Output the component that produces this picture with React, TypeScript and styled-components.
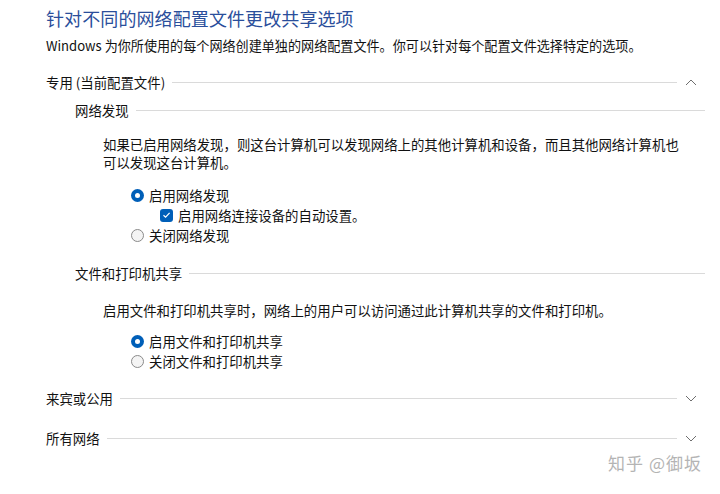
import styled, { createGlobalStyle } from "styled-components";

const GlobalStyle = createGlobalStyle`
  html, body {
    margin: 0;
    padding: 0;
    background: #ffffff;
  }
  body {
    font-family: "Noto Sans CJK SC", "Noto Sans", sans-serif;
    color: #111111;
  }
`;

const Page = styled.div`
  position: relative;
  width: 720px;
  height: 494px;
  box-sizing: border-box;
  padding: 7px 15px 0 46px;
  overflow: hidden;
`;

const Title = styled.h1`
  margin: 0;
  font-size: 18px;
  font-weight: 400;
  line-height: 22px;
  color: #2a4e9b;
  letter-spacing: 0.1px;
`;

const Desc = styled.p`
  margin: 7px 0 0;
  font-size: 13.1px;
  line-height: 20px;
  white-space: nowrap;
`;

const HeaderRow = styled.div<{ $top: number }>`
  display: flex;
  align-items: center;
  height: 20px;
  margin-top: ${(p) => p.$top}px;
  font-size: 13.4px;
`;

const HeaderText = styled.span`
  white-space: nowrap;
  margin-right: 7px;
`;

const Rule = styled.div`
  flex: 1;
  height: 1px;
  background: #dadada;
`;

const Chevron = styled.span`
  width: 28px;
  display: flex;
  justify-content: center;
  align-items: center;
`;

const Sub = styled.div`
  padding-left: 29px;
`;

const Body = styled.div`
  padding-left: 28px;
`;

const Para = styled.p<{ $top: number }>`
  margin: ${(p) => p.$top}px 0 0;
  font-size: 13.4px;
  line-height: 18px;
  white-space: nowrap;
`;

const Options = styled.div<{ $top: number; $left?: number }>`
  margin-top: ${(p) => p.$top}px;
  padding-left: ${(p) => p.$left ?? 28}px;
  display: flex;
  flex-direction: column;
`;

const OptionRow = styled.div<{ $indent?: number }>`
  display: flex;
  align-items: center;
  height: 20px;
  padding-left: ${(p) => p.$indent ?? 0}px;
  font-size: 13.4px;
  gap: 5px;
`;

const Radio = styled.span<{ $on?: boolean }>`
  width: 13px;
  height: 13px;
  box-sizing: border-box;
  border-radius: 50%;
  flex: none;
  display: flex;
  align-items: center;
  justify-content: center;
  background: ${(p) => (p.$on ? "#005fb8" : "#f4f4f4")};
  border: ${(p) => (p.$on ? "none" : "1px solid #8a8a8a")};
  &::after {
    content: "";
    display: ${(p) => (p.$on ? "block" : "none")};
    width: 5px;
    height: 5px;
    border-radius: 50%;
    background: #ffffff;
  }
`;

const Check = styled.span`
  width: 13px;
  height: 13px;
  border-radius: 3px;
  background: #005fb8;
  flex: none;
  display: flex;
  align-items: center;
  justify-content: center;
`;

const Watermark = styled.div`
  position: absolute;
  right: 18px;
  top: 451px;
  font-size: 17px;
  line-height: 24px;
  color: #b4b4b4;
  letter-spacing: 1px;
`;

const ChevronIcon = ({ up }: { up?: boolean }) => (
  <svg width="12" height="7" viewBox="0 0 12 7">
    <polyline
      points={up ? "1,6 6,1 11,6" : "1,1 6,6 11,1"}
      fill="none"
      stroke="#6e6e6e"
      strokeWidth="1"
    />
  </svg>
);

const CheckMark = () => (
  <svg width="9" height="8" viewBox="0 0 9 8">
    <polyline points="1.5,4.2 3.6,6.2 7.6,1.8" fill="none" stroke="#fff" strokeWidth="1.2" />
  </svg>
);

export default function App() {
  return (
    <Page>
      <GlobalStyle />
      <Title>针对不同的网络配置文件更改共享选项</Title>
      <Desc>Windows 为你所使用的每个网络创建单独的网络配置文件。你可以针对每个配置文件选择特定的选项。</Desc>

      <HeaderRow $top={16}>
        <HeaderText>专用 (当前配置文件)</HeaderText>
        <Rule />
        <Chevron>
          <ChevronIcon up />
        </Chevron>
      </HeaderRow>

      <Sub>
        <HeaderRow $top={8}>
          <HeaderText>网络发现</HeaderText>
          <Rule />
        </HeaderRow>
        <Body>
          <Para $top={15}>
            如果已启用网络发现，则这台计算机可以发现网络上的其他计算机和设备，而且其他网络计算机也
            <br />
            可以发现这台计算机。
          </Para>
        </Body>
        <Options $top={14} $left={56}>
          <OptionRow>
            <Radio $on />
            启用网络发现
          </OptionRow>
          <OptionRow $indent={29}>
            <Check>
              <CheckMark />
            </Check>
            启用网络连接设备的自动设置。
          </OptionRow>
          <OptionRow>
            <Radio />
            关闭网络发现
          </OptionRow>
        </Options>

        <HeaderRow $top={18}>
          <HeaderText>文件和打印机共享</HeaderText>
          <Rule />
        </HeaderRow>
        <Body>
          <Para $top={18}>启用文件和打印机共享时，网络上的用户可以访问通过此计算机共享的文件和打印机。</Para>
          <Options $top={12}>
            <OptionRow>
              <Radio $on />
              启用文件和打印机共享
            </OptionRow>
            <OptionRow>
              <Radio />
              关闭文件和打印机共享
            </OptionRow>
          </Options>
        </Body>
      </Sub>

      <HeaderRow $top={17}>
        <HeaderText>来宾或公用</HeaderText>
        <Rule />
        <Chevron>
          <ChevronIcon />
        </Chevron>
      </HeaderRow>

      <HeaderRow $top={20}>
        <HeaderText>所有网络</HeaderText>
        <Rule />
        <Chevron>
          <ChevronIcon />
        </Chevron>
      </HeaderRow>

      <Watermark>知乎 @御坂</Watermark>
    </Page>
  );
}
